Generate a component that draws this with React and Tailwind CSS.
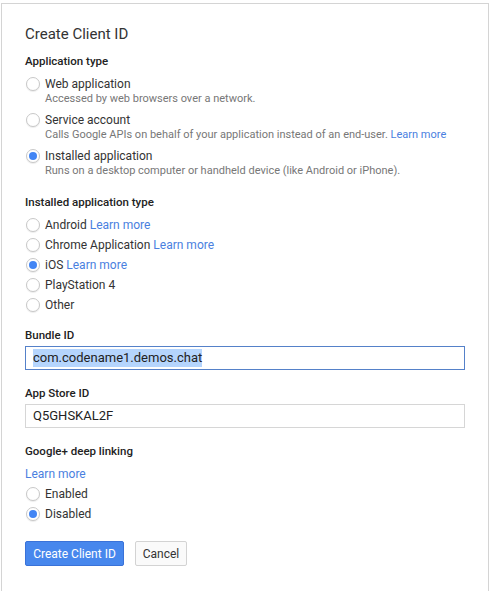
import React from "react";

function Radio({ checked }) {
  return (
    <span className="flex h-[14px] w-[14px] shrink-0 items-center justify-center rounded-full border border-[#c8c8c8] bg-white shadow-[0_1px_1px_rgba(0,0,0,0.08)]">
      {checked && <span className="h-[8px] w-[8px] rounded-full bg-[#4285f4]" />}
    </span>
  );
}

function Link({ children }) {
  return <span className="text-[#4a7fe0]">{children}</span>;
}

function OptionRow({ checked, children, className = "" }) {
  return (
    <div className={"flex h-[20px] items-center gap-[5px] pl-[1px] text-[12px] text-[#333] " + className}>
      <Radio checked={checked} />
      <span>{children}</span>
    </div>
  );
}

function AppType({ checked, title, desc, className = "" }) {
  return (
    <div className={className}>
      <div className="flex h-[16px] items-center gap-[5px] pl-[1px] text-[12px] text-[#333]">
        <Radio checked={checked} />
        <span>{title}</span>
      </div>
      <div className="h-[14px] pl-[20px] text-[11px] leading-[14px] text-[#777]">{desc}</div>
    </div>
  );
}

function Heading({ children, className = "" }) {
  return (
    <div className={"h-[16px] text-[11.5px] font-medium leading-[16px] text-[#222] " + className}>
      {children}
    </div>
  );
}

export default function App() {
  return (
    <div className="h-[591px] w-[490px] overflow-hidden bg-white font-['Roboto',sans-serif]">
      <div className="mx-[1px] mt-[3px] h-[600px] border border-b-0 border-[#d4d4d4] px-[23px] pt-[20px]">
        <div className="h-[20px] text-[15px] leading-[20px] text-[#333]">Create Client ID</div>

        <Heading className="mt-[9px]">Application type</Heading>
        <AppType
          className="mt-[7px]"
          title="Web application"
          desc="Accessed by web browsers over a network."
        />
        <AppType
          className="mt-[6px]"
          title="Service account"
          desc={
            <>
              Calls Google APIs on behalf of your application instead of an end-user.{" "}
              <Link>Learn more</Link>
            </>
          }
        />
        <AppType
          className="mt-[6px]"
          checked
          title="Installed application"
          desc="Runs on a desktop computer or handheld device (like Android or iPhone)."
        />

        <Heading className="mt-[16px]">Installed application type</Heading>
        <OptionRow className="mt-[5px]">
          Android <Link>Learn more</Link>
        </OptionRow>
        <OptionRow>
          Chrome Application <Link>Learn more</Link>
        </OptionRow>
        <OptionRow checked>
          iOS <Link>Learn more</Link>
        </OptionRow>
        <OptionRow>PlayStation 4</OptionRow>
        <OptionRow>Other</OptionRow>

        <Heading className="mt-[12px]">Bundle ID</Heading>
        <div className="mt-[3px] flex h-[24px] w-[440px] items-center border border-[#5581c9] pl-[7px] text-[13px] text-[#222]">
          <span className="bg-[#b5d5fd] leading-[18px]">com.codename1.demos.chat</span>
        </div>

        <Heading className="mt-[15px]">App Store ID</Heading>
        <div className="mt-[3px] flex h-[24px] w-[440px] items-center border border-[#d6d6d6] pl-[7px] text-[13px] text-[#222]">
          Q5GHSKAL2F
        </div>

        <Heading className="mt-[15px]">Google+ deep linking</Heading>
        <div className="mt-[7px] h-[16px] text-[12px] leading-[16px] text-[#4a7fe0]">Learn more</div>
        <OptionRow className="mt-[2px]">Enabled</OptionRow>
        <OptionRow checked>Disabled</OptionRow>

        <div className="mt-[17px] flex gap-[11px]">
          <button className="h-[25px] w-[99px] rounded-[2px] border border-[#3a72d8] bg-[#4787ed] text-[12px] text-white">
            Create Client ID
          </button>
          <button className="h-[25px] w-[52px] rounded-[2px] border border-[#d3d3d3] bg-[#fafafa] text-[12px] text-[#333]">
            Cancel
          </button>
        </div>
      </div>
    </div>
  );
}
